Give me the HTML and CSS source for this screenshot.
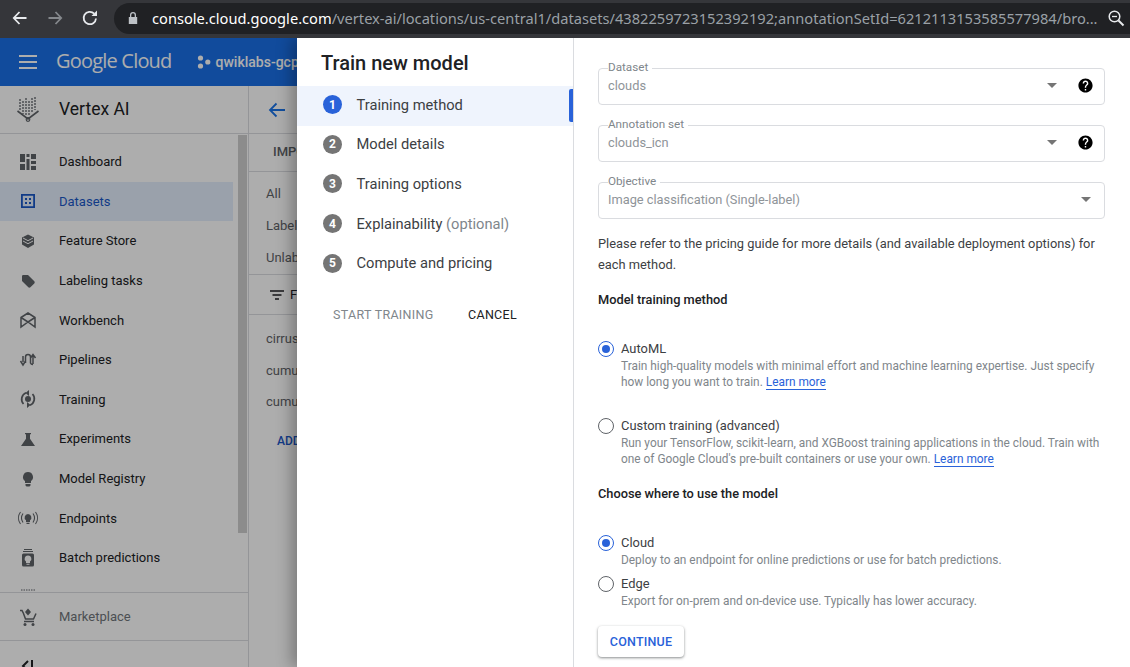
FILE: index.html
```html
<!DOCTYPE html>
<html lang="en">
<head>
<meta charset="utf-8">
<title>Train new model - Vertex AI</title>
<link rel="stylesheet" href="styles.css">
</head>
<body>
<div class="chrome">
  <svg class="c-ico" width="18" height="18" viewBox="0 0 18 18"><path d="M15.500 9H3M8.500 3 2.800 9l5.700 6" fill="none" stroke="#e8eaed" stroke-width="1.800"/></svg>
  <svg class="c-ico" width="18" height="18" viewBox="0 0 18 18"><path d="M2.500 9H15M9.500 3l5.700 6-5.700 6" fill="none" stroke="#85888c" stroke-width="1.800"/></svg>
  <svg class="c-ico" width="18" height="18" viewBox="0 0 18 18"><path d="M15 9.500A6.200 6.200 0 1 1 13.200 4.600" fill="none" stroke="#e8eaed" stroke-width="1.800"/><path d="M16 1.500V7h-5.500z" fill="#e8eaed"/></svg>
  <div class="omnibox">
    <svg width="12" height="14" viewBox="0 0 12 14"><path d="M3 6V4a3 3 0 0 1 6 0v2h1.200v7H1.800V6zm1.300 0h3.400V4a1.700 1.700 0 0 0-3.400 0z" fill="#bdc1c6"/></svg>
    <div class="url"><span class="url-host">console.cloud.google.com</span>/vertex-ai/locations/us-central1/datasets/4382259723152392192;annotationSetId=6212113153585577984/bro...</div>
    <svg width="18" height="18" viewBox="0 0 18 18"><circle cx="7.500" cy="7.500" r="5.300" fill="none" stroke="#e8eaed" stroke-width="1.500"/><path d="M5 7.500h5" stroke="#e8eaed" stroke-width="1.300"/><path d="m11.500 11.500 5 5" stroke="#e8eaed" stroke-width="2"/></svg>
  </div>
</div>

<div class="console">
  <header class="topbar">
    <svg width="18" height="14" viewBox="0 0 18 14"><path d="M0 1h18M0 7h18M0 13h18" stroke="#fff" stroke-width="2"/></svg>
    <span class="gc-logo">Google Cloud</span>
    <svg class="proj-ico" width="14" height="14" viewBox="0 0 14 14"><circle cx="3.500" cy="3" r="2.600" fill="#fff"/><circle cx="3.500" cy="11" r="2.600" fill="#fff"/><circle cx="10.800" cy="7" r="2.600" fill="#fff"/></svg>
    <span class="proj">qwiklabs-gcp</span>
  </header>
  <div class="workspace">
    <aside class="sidebar">
      <div class="brand">
        <svg width="24" height="26" viewBox="0 0 24 26"><g stroke="#5f6368" stroke-width="1.300" stroke-dasharray="2 1" fill="none"><path d="M4 3v12M7 5v13M10 2v17M13 5v14M16 2v15M19 1v13"/></g><path d="M1.500 15 12 23l10.500-8" fill="none" stroke="#5f6368" stroke-width="1.600"/><circle cx="12" cy="23.500" r="1.800" fill="none" stroke="#5f6368" stroke-width="1.200"/></svg>
        <span class="brand-name">Vertex AI</span>
      </div>
      <nav class="nav">
        <ul class="nav-list">
          <li class="nav-item"><svg class="nav-ico" width="24" height="24" viewBox="0 0 24 24"><path d="M4 4h5v8H4zM4 14h5v6H4zM10.500 4h3v3h-3zM10.500 9h3v11h-3zM15 4h5v5h-5zM15 11h5v3h-5zM15 16h5v4h-5z" fill="#5f6368"/></svg><span>Dashboard</span></li>
          <li class="nav-item is-active"><svg class="nav-ico" width="24" height="24" viewBox="0 0 24 24"><path d="M5 5h14v14H5zM6.800 6.800v10.400h10.400V6.800z" fill="#1a57c8" fill-rule="evenodd"/><path d="M9 9h2v2H9zM13 9h2v2h-2zM9 13h2v2H9zM13 13h2v2h-2z" fill="#1a57c8"/></svg><span>Datasets</span></li>
          <li class="nav-item"><svg class="nav-ico" width="24" height="24" viewBox="0 0 24 24"><path d="M12 5.500 18 8.500v7L12 19l-6-3.500v-7z" fill="#5f6368"/><path d="m7 9 5 2.700L17 9M7 12l5 2.700 5-2.700" fill="none" stroke="#fff" stroke-width="1"/></svg><span>Feature Store</span></li>
          <li class="nav-item"><svg class="nav-ico" width="24" height="24" viewBox="0 0 24 24"><path d="M6 7.300C6 6.500 6.700 6 7.500 6H12l6.300 6.300c.6.600.6 1.500 0 2.100l-3.900 3.900c-.6.600-1.500.6-2.100 0L6 12z" fill="#5f6368"/></svg><span>Labeling tasks</span></li>
          <li class="nav-item"><svg class="nav-ico" width="24" height="24" viewBox="0 0 24 24"><path d="M5 9.500 12 5l7 4.500V19l-7-5-7 5zM5 9.500l7 4.500 7-4.500" fill="none" stroke="#5f6368" stroke-width="1.500"/></svg><span>Workbench</span></li>
          <li class="nav-item"><svg class="nav-ico" width="24" height="24" viewBox="0 0 24 24"><path d="M7 8v6M4.500 13 7 17l2.500-4M9.500 15V9a2.500 2.500 0 0 1 5 0v6a2.500 2.500 0 0 0 2.500 1.500M17 16V7M14.500 10 17 6.500l2.500 3.500" fill="none" stroke="#5f6368" stroke-width="1.500"/></svg><span>Pipelines</span></li>
          <li class="nav-item"><svg class="nav-ico" width="24" height="24" viewBox="0 0 24 24"><path d="M7.500 17A7 7 0 0 1 10 5.800M16.500 7a7 7 0 0 1-2.500 11.200" fill="none" stroke="#5f6368" stroke-width="1.700"/><path d="M13 3v6L9.500 6zM11 21v-6l3.500 3z" fill="#5f6368"/><circle cx="12" cy="12" r="3" fill="#5f6368"/></svg><span>Training</span></li>
          <li class="nav-item"><svg class="nav-ico" width="24" height="24" viewBox="0 0 24 24"><path d="M9 6h6v1.200h-1v4.500l5 7.300H5l5-7.300V7.200H9z" fill="#5f6368"/></svg><span>Experiments</span></li>
          <li class="nav-item"><svg class="nav-ico" width="24" height="24" viewBox="0 0 24 24"><path d="M12 5a5 5 0 0 1 3 9v2H9v-2a5 5 0 0 1 3-9zM9.500 17h5v1.500l-1 1h-3l-1-1z" fill="#5f6368"/></svg><span>Model Registry</span></li>
          <li class="nav-item"><svg class="nav-ico" width="24" height="24" viewBox="0 0 24 24"><path d="M12 8a3.500 3.500 0 0 1 2 6.300V16h-4v-1.700A3.500 3.500 0 0 1 12 8zM10.500 16.800h3V18h-3z" fill="#5f6368"/><path d="M7 7.500a8 8 0 0 0 0 9M4.500 6a10 10 0 0 0 0 12M17 7.500a8 8 0 0 1 0 9M19.500 6a10 10 0 0 1 0 12" fill="none" stroke="#5f6368" stroke-width="1.100"/></svg><span>Endpoints</span></li>
          <li class="nav-item"><svg class="nav-ico" width="24" height="24" viewBox="0 0 24 24"><path d="M8 3.500h8M7 5.500h10" stroke="#5f6368" stroke-width="1"/><path d="M7.500 7.500h9A1.500 1.500 0 0 1 18 9v10a1.500 1.500 0 0 1-1.500 1.500h-9A1.500 1.500 0 0 1 6 19V9a1.500 1.500 0 0 1 1.500-1.500z" fill="#5f6368"/><path d="M12 9.500a3.300 3.300 0 0 1 2 6v1.500h-4v-1.500a3.300 3.300 0 0 1 2-6zM10.500 17.800h3v1h-3z" fill="#fff"/></svg><span>Batch predictions</span></li>
          <li class="nav-item"><svg class="nav-ico" width="24" height="24" viewBox="0 0 24 24"><path d="M5 5h14" stroke="#5f6368" stroke-width="1" stroke-dasharray="1.500 1"/></svg></li>
        </ul>
        <div class="scrollbar"><div class="scroll-thumb"></div></div>
      </nav>
      <div class="market">
        <svg class="nav-ico" width="24" height="24" viewBox="0 0 24 24"><path d="M12 3.500 15 7l-3 3.500L9 7z" fill="#5f6368"/><path d="M4 5.500h2l1.500 3 2 5.500h8L20 8.500" fill="none" stroke="#5f6368" stroke-width="1.500"/><path d="M8 16.500h10" stroke="#5f6368" stroke-width="1.500"/><circle cx="9" cy="19.500" r="1.500" fill="#5f6368"/><circle cx="17" cy="19.500" r="1.500" fill="#5f6368"/></svg>
        <span>Marketplace</span>
      </div>
      <div class="collapse">
        <svg width="24" height="24" viewBox="0 0 24 24"><path d="M11 7l-5 5 5 5" fill="none" stroke="#202124" stroke-width="2"/><path d="M15 6v12" stroke="#202124" stroke-width="2"/></svg>
      </div>
    </aside>
    <main class="main">
      <div class="main-head"><svg width="20" height="20" viewBox="0 0 20 20"><path d="M18 10H3M9.500 3.500 3 10l6.500 6.500" fill="none" stroke="#1a73e8" stroke-width="1.800"/></svg></div>
      <div class="tabs"><span>IMPORT</span></div>
      <ul class="filters"><li>All</li><li>Labeled</li><li>Unlabeled</li></ul>
      <div class="filter-bar">
        <svg width="14" height="10" viewBox="0 0 14 10"><path d="M0 1h14M2.500 5h9M5 9h4" stroke="#202124" stroke-width="1.700"/></svg>
        <span>Filter</span>
      </div>
      <ul class="labels"><li>cirrus</li><li>cumulonimbus</li><li>cumulus</li></ul>
      <div class="add">ADD</div>
    </main>
  </div>
  <div class="scrim"></div>

  <section class="panel">
    <div class="stepper">
      <h1 class="title">Train new model</h1>
      <ol class="steps">
        <li class="step is-current"><span class="num">1</span>Training method</li>
        <li class="step"><span class="num">2</span>Model details</li>
        <li class="step"><span class="num">3</span>Training options</li>
        <li class="step"><span class="num">4</span>Explainability&nbsp;<span class="opt">(optional)</span></li>
        <li class="step"><span class="num">5</span>Compute and pricing</li>
      </ol>
      <div class="actions">
        <span class="start">START TRAINING</span>
        <span class="cancel">CANCEL</span>
      </div>
    </div>
    <div class="form">
      <fieldset class="field">
        <legend>Dataset</legend>
        <div class="field-row"><span class="value">clouds</span><span class="caret"></span>
        <svg class="help" width="17" height="17" viewBox="0 0 24 24"><path d="M12 2C6.480 2 2 6.480 2 12s4.480 10 10 10 10-4.480 10-10S17.520 2 12 2zm1 17h-2v-2h2v2zm2.070-7.750l-.9.920C13.450 12.900 13 13.500 13 15h-2v-.5c0-1.100.45-2.100 1.170-2.830l1.240-1.260c.37-.36.59-.86.59-1.410 0-1.100-.9-2-2-2s-2 .9-2 2H8c0-2.210 1.790-4 4-4s4 1.790 4 4c0 .88-.36 1.680-.93 2.250z"/></svg></div>
      </fieldset>
      <fieldset class="field">
        <legend>Annotation set</legend>
        <div class="field-row"><span class="value">clouds_icn</span><span class="caret"></span>
        <svg class="help" width="17" height="17" viewBox="0 0 24 24"><path d="M12 2C6.480 2 2 6.480 2 12s4.480 10 10 10 10-4.480 10-10S17.520 2 12 2zm1 17h-2v-2h2v2zm2.070-7.750l-.9.920C13.450 12.900 13 13.500 13 15h-2v-.5c0-1.100.45-2.100 1.170-2.830l1.240-1.260c.37-.36.59-.86.59-1.410 0-1.100-.9-2-2-2s-2 .9-2 2H8c0-2.210 1.790-4 4-4s4 1.790 4 4c0 .88-.36 1.680-.93 2.250z"/></svg></div>
      </fieldset>
      <fieldset class="field">
        <legend>Objective</legend>
        <div class="field-row"><span class="value">Image classification (Single-label)</span><span class="caret caret-solo"></span></div>
      </fieldset>
      <p class="note">Please refer to the pricing guide for more details (and available deployment options) for each method.</p>
      <h2 class="heading">Model training method</h2>
      <div class="option opt-automl">
        <span class="radio is-on"></span>
        <div class="opt-body"><div class="opt-title">AutoML</div><div class="opt-desc">Train high-quality models with minimal effort and machine learning expertise. Just specify how long you want to train. <a class="link">Learn more</a></div></div>
      </div>
      <div class="option opt-custom">
        <span class="radio"></span>
        <div class="opt-body"><div class="opt-title">Custom training (advanced)</div><div class="opt-desc">Run your TensorFlow, scikit-learn, and XGBoost training applications in the cloud. Train with one of Google Cloud's pre-built containers or use your own. <a class="link">Learn more</a></div></div>
      </div>
      <h2 class="heading heading-use">Choose where to use the model</h2>
      <div class="option opt-cloud">
        <span class="radio is-on"></span>
        <div class="opt-body"><div class="opt-title">Cloud</div><div class="opt-desc">Deploy to an endpoint for online predictions or use for batch predictions.</div></div>
      </div>
      <div class="option opt-edge">
        <span class="radio"></span>
        <div class="opt-body"><div class="opt-title">Edge</div><div class="opt-desc">Export for on-prem and on-device use. Typically has lower accuracy.</div></div>
      </div>
      <button class="continue">CONTINUE</button>
    </div>
  </section>
</div>
</body>
</html>
```
FILE: styles.css
```css
* { box-sizing: border-box; }
html, body { margin: 0; height: 100%; }
body {
  width: 1130px; height: 667px; overflow: hidden;
  font-family: Roboto, "Liberation Sans", sans-serif;
  color: #202124; background: #fff;
  display: flex; flex-direction: column;
}
ul, ol { list-style: none; margin: 0; padding: 0; }

/* browser chrome */
.chrome {
  height: 38px; flex: none; background: #35363a;
  display: flex; align-items: center; padding: 0 0 2px 11px; gap: 17px;
}
.omnibox {
  flex: 1; height: 31px; margin-left: -2px; background: #202124;
  border-radius: 16px 0 0 16px; display: flex; align-items: center;
  padding: 0 5px 0 13px; min-width: 0;
}
.url {
  flex: 1; margin-left: 13px; white-space: nowrap; overflow: hidden;
  font: 14.650px "Noto Sans", "Open Sans", sans-serif; color: #9aa0a6;
}
.url-host { color: #fff; }

/* console under the scrim */
.console { flex: 1; min-height: 0; position: relative; overflow: hidden; display: flex; flex-direction: column; }
.scrim { position: absolute; inset: 0; background: rgba(0,0,0,.32); }
.topbar {
  height: 48px; flex: none; background: #1a6fe6; display: flex; align-items: center;
  padding-left: 19px; color: #fff; white-space: nowrap;
}
.gc-logo { font: 400 20px "Open Sans", sans-serif; letter-spacing: -.8px; margin-left: 19px; padding-bottom: 3px; }
.proj-ico { margin-left: 25px; }
.proj { font-size: 14px; font-weight: 500; margin-left: 5px; }
.workspace { flex: 1; display: flex; min-height: 0; }
.sidebar { width: 249px; flex: none; border-right: 1px solid #dadce0; display: flex; flex-direction: column; }
.brand { height: 48px; flex: none; border-bottom: 1px solid #dadce0; display: flex; align-items: center; padding: 0 0 1px 16px; }
.brand-name { font-size: 17.500px; margin-left: 19px; }
.nav { flex: 1; min-height: 0; display: flex; overflow: hidden; padding-right: 1px; }
.nav-list { width: 233px; flex: none; padding-top: 8px; }
.nav-item { height: 39.600px; display: flex; align-items: center; padding-left: 16px; font-size: 13px; color: #202124; }
.nav-ico { flex: none; margin-right: 19px; }
.is-active { background: #e3eefc; color: #1a57c8; }
.scrollbar { width: 14px; flex: none; padding: 1px 0 0 5px; }
.scroll-thumb { height: 398px; background: #cecece; }
.market {
  height: 49px; flex: none; border-top: 1px solid #dadce0; border-bottom: 1px solid #dadce0;
  display: flex; align-items: center; padding-left: 16px; font-size: 13px; color: #70757a;
}
.collapse { flex: none; height: 26px; padding: 13px 0 0 17px; overflow: hidden; }
.main { flex: 1; min-width: 0; white-space: nowrap; font-size: 13px; color: #5f6368; overflow: hidden; }
.main-head { height: 48px; display: flex; align-items: center; padding-left: 18px; border-bottom: 1px solid #dadce0; }
.tabs { height: 38px; padding-left: 24px; font-weight: 500; line-height: 35px; border-bottom: 1px solid #dadce0; }
.filters { padding: 6px 0 0 17px; height: 103px; border-bottom: 1px solid #dadce0; }
.filters li { height: 32px; line-height: 32px; }
.filter-bar { height: 40px; display: flex; align-items: center; gap: 6px; padding-left: 21px; border-bottom: 1px solid #dadce0; color: #202124; }
.labels { padding: 8px 0 0 17px; }
.labels li { height: 31.500px; line-height: 31.500px; }
.add { padding: 16px 0 0 28px; color: #1a57c8; font-weight: 500; font-size: 12px; }

/* dialog panel */
.panel {
  position: absolute; top: 0; left: 297px; right: 0; bottom: 0; background: #fff;
  display: flex; box-shadow: -6px 0 14px rgba(0,0,0,.28);
}
.stepper { width: 277px; flex: none; border-right: 1px solid #dadce0; }
.title { margin: 0; height: 48px; padding: 13px 0 0 24px; font-size: 20px; line-height: 24px; font-weight: 500; color: #202124; }
.steps { font-size: 14.700px; color: #3c4043; }
.step { height: 39.700px; display: flex; align-items: center; padding: 0 0 2.500px 26px; position: relative; }
.is-current { background: #eff4fd; }
.is-current::after {
  content: ""; position: absolute; right: 0; top: 3px; bottom: 4px; width: 4px;
  background: #2962d9; border-radius: 2px 0 0 2px;
}
.num {
  width: 19px; height: 19px; flex: none; border-radius: 50%; margin-right: 14.500px; background: #757575;
  color: #fff; font-size: 12px; font-weight: 700; display: flex; align-items: center; justify-content: center;
}
.is-current .num { background: #2962d9; }
.opt { color: #80868b; }
.actions { display: flex; padding: 21px 0 0 36px; font-size: 12.500px; line-height: 20px; gap: 34.500px; letter-spacing: .3px; }
.start { color: #80868b; }
.cancel { color: #202124; }

.form { flex: 1; min-width: 0; padding: 23px 25px 0 24px; font-size: 12.850px; color: #3c4043; }
.field { margin: 0 0 13px; padding: 0 10.500px 0 9px; border: 1px solid #dadce0; border-radius: 4px; height: 44px; min-width: 0; }
.field legend { padding: 0 4px 2px 0; font-size: 11.700px; line-height: 12px; color: #80868b; background: #fff; }
.field-row { display: flex; align-items: center; height: 20px; }
.value { flex: 1; color: #8f9499; font-size: 12.800px; }
.caret { width: 0; height: 0; border: 5.500px solid transparent; border-top: 5px solid #757575; border-bottom: 0; margin-right: 20px; }
.caret-solo { margin-right: 3px; }
.help { fill: #000; flex: none; }
.note { margin: 14px 0 0; line-height: 21px; }
.heading { margin: 15px 0 0; font-size: 12.800px; font-weight: 500; line-height: 20px; color: #202124; }
.heading-use { margin-top: 17px; }
.option { display: flex; }
.opt-automl { margin-top: 30px; }
.opt-custom { margin-top: 27px; }
.opt-cloud { margin-top: 30px; }
.opt-edge { margin-top: 7px; }
.radio { width: 16px; height: 16px; flex: none; margin: 1px 7px 0 0; border: 1.500px solid #5f6368; border-radius: 50%; background: #fff; display: flex; align-items: center; justify-content: center; }
.radio.is-on { border-color: #2962d9; }
.radio.is-on::after { content: ""; width: 8px; height: 8px; border-radius: 50%; background: #2962d9; }
.opt-body { flex: 1; min-width: 0; }
.opt-title { font-size: 12.900px; line-height: 18px; color: #3c4043; }
.opt-desc { font-size: 11.880px; line-height: 16px; color: #80868b; }
.link { color: #2962d9; border-bottom: 1px solid #2962d9; }
.continue {
  display: block; margin-top: 17px; width: 86px; height: 31px; padding: 0; border: 0; border-radius: 4px;
  background: #fff; color: #2962d9; font: 500 12.500px Roboto, sans-serif; letter-spacing: .2px;
  box-shadow: 0 1px 3px rgba(60,64,67,.45), 0 1px 2px rgba(60,64,67,.2);
}
```
